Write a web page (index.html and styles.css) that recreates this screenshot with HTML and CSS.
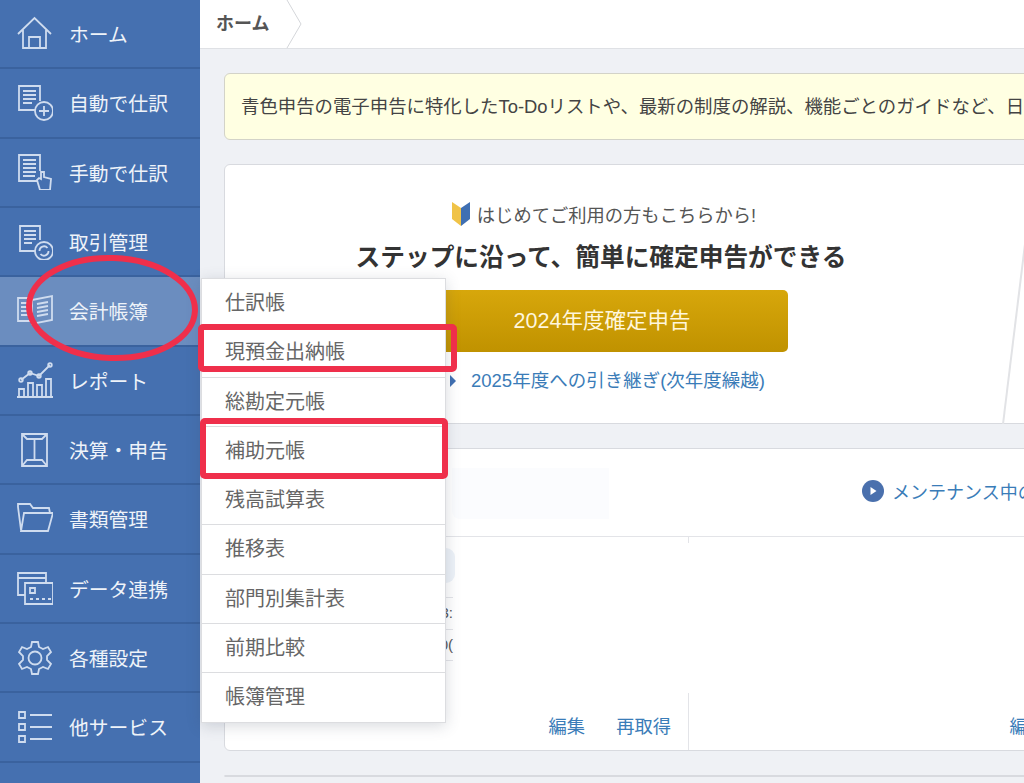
FILE: index.html
```html
<!DOCTYPE html>
<html lang="ja">
<head>
  <meta charset="UTF-8" />
  <meta name="viewport" content="width=device-width, initial-scale=1.0" />
  <title>ホーム</title>
  <link rel="stylesheet" href="styles.css">
</head>
<body>
  <aside class="sidebar">
    <a class="side-item">
      <svg class="side-icon" viewBox="0 0 36 36"><path d="M1 18 17.500 2 34 18M6 14v18h23V14M12 32V21h11v11"/></svg>
      <span>ホーム</span>
    </a>
    <a class="side-item">
      <svg class="side-icon" viewBox="0 0 36 36"><path d="M18 25H2V1h21v15M6 6h13M6 10h13M6 14h13M6 18h9"/><circle cx="27" cy="26" r="9"/><path d="M27 21v10M22 26h10"/></svg>
      <span>自動で仕訳</span>
    </a>
    <a class="side-item">
      <svg class="side-icon" viewBox="0 0 36 36"><path d="M20 27H2V1h21v16M6 6h13M6 10h13M6 14h13M6 18h13M6 22h12"/><path d="M23 36l-3-10 2-2 2 1v-7h3v5l7 2-1 11z"/></svg>
      <span>手動で仕訳</span>
    </a>
    <a class="side-item">
      <svg class="side-icon" viewBox="0 0 36 36"><path d="M18 27H3V2h20v14M7 7h12M7 11h12M7 15h12M7 19h8"/><circle cx="27" cy="27" r="9"/><path d="M22.500 27a4.500 4.500 0 0 1 8-3M31.500 27a4.500 4.500 0 0 1-8 3"/></svg>
      <span>取引管理</span>
    </a>
    <a class="side-item active">
      <svg class="side-icon" viewBox="0 0 36 36"><path d="M15 5 1 5v23h14M15 7l20-4v24l-20 4zM4 10h8M4 14h8M4 18h8M4 22h8M20 11l11-2M20 15l11-2M20 19l11-2M20 23l11-2"/></svg>
      <span>会計帳簿</span>
    </a>
    <a class="side-item">
      <svg class="side-icon" viewBox="0 0 36 36"><path d="M0 35h36M2 34v-7h5v7M11 34V21h5v13M20 34V23h5v11M29 34V17h5v17M4 18l9-7 9 3L33 3"/><circle cx="4" cy="18" r="1.800"/><circle cx="13" cy="11" r="1.800"/><circle cx="22" cy="14" r="1.800"/><circle cx="33" cy="3" r="1.800"/></svg>
      <span>レポート</span>
    </a>
    <a class="side-item">
      <svg class="side-icon" viewBox="0 0 36 36"><path d="M5 2h25v32H5zM5 2l5 5h15l5-5M10 7h15M17.500 7v21M5 34l5-6h15l5 6"/></svg>
      <span>決算・申告</span>
    </a>
    <a class="side-item">
      <svg class="side-icon" viewBox="0 0 36 36"><path d="M4 29 1 6V3h12l3 4h16l1 5M4 30h27l5-18H7z"/></svg>
      <span>書類管理</span>
    </a>
    <a class="side-item">
      <svg class="side-icon" viewBox="0 0 36 36"><path d="M8 25H1V3h28v10M1 8h28M8 13h28v21H8zM13 18h5v5h-5zM13 29h3M19 29h3M25 29h3M31 29h3"/></svg>
      <span>データ連携</span>
    </a>
    <a class="side-item">
      <svg class="side-icon" viewBox="0 0 36 36"><path d="M15 2h6l1 5 4 2 5-2 3 5-4 4v4l4 4-3 5-5-2-4 2-1 5h-6l-1-5-4-2-5 2-3-5 4-4v-4l-4-4 3-5 5 2 4-2z"/><circle cx="18" cy="18" r="6.500"/></svg>
      <span>各種設定</span>
    </a>
    <a class="side-item">
      <svg class="side-icon" viewBox="0 0 36 36"><path d="M2 3h6v6H2zM2 15h6v6H2zM2 27h6v6H2zM13 6h22M13 18h22M13 30h22"/></svg>
      <span>他サービス</span>
    </a>
  </aside>

  <div class="content">
    <div class="topbar">
      <div class="crumb">ホーム</div>
      <svg class="crumb-arrow" viewBox="0 0 16 48"><path d="M1 0 15 24 1 48"/></svg>
    </div>

    <div class="page">
      <div class="notice">青色申告の電子申告に特化したTo-Doリストや、最新の制度の解説、機能ごとのガイドなど、日々の業務に役立つ情報をご案内しています。</div>

      <section class="card hero">
        <svg class="hero-line" viewBox="0 0 24 180"><path d="M23 0 1 180"/></svg>
        <div class="hero-inner">
          <p class="hero-lead">
            <svg class="wakaba" viewBox="0 0 18 24"><path class="wakaba-l" d="M0 0 9 6v18L0 17z"/><path class="wakaba-r" d="M18 0 9 6v18l9-7z"/></svg>
            はじめてご利用の方もこちらから!
          </p>
          <h2 class="hero-title">ステップに沿って、簡単に確定申告ができる</h2>
          <a class="gold-btn">2024年度確定申告</a>
          <a class="hero-link">2025年度への引き継ぎ(次年度繰越)</a>
        </div>
      </section>

      <section class="card accounts">
        <div class="accounts-head">
          <div class="faint-box"></div>
          <a class="maint-link">
            <svg class="play" viewBox="0 0 22 22"><circle cx="11" cy="11" r="11"/><path d="M8.500 7v8l6-4z"/></svg>
            メンテナンス中の金融機関について
          </a>
        </div>
        <div class="accounts-body">
          <div class="acct-col">
            <div class="acct-logo"></div>
            <div class="acct-rows">
              <div class="acct-row">3:</div>
              <div class="acct-row">0(</div>
            </div>
            <div class="acct-foot"><a>編集</a><a>再取得</a></div>
          </div>
          <div class="acct-col">
            <div class="acct-foot"><a>編集</a><a>再取得</a></div>
          </div>
        </div>
      </section>

      <section class="card"></section>
    </div>
  </div>

  <ul class="flyout">
    <li>仕訳帳</li>
    <li>現預金出納帳</li>
    <li>総勘定元帳</li>
    <li>補助元帳</li>
    <li>残高試算表</li>
    <li>推移表</li>
    <li>部門別集計表</li>
    <li>前期比較</li>
    <li>帳簿管理</li>
  </ul>

  <!-- red marks drawn over the screenshot -->
  <svg class="marks" viewBox="0 0 1024 783">
    <ellipse cx="112" cy="308" rx="83" ry="50" transform="rotate(2 112 308)"/>
    <rect x="201" y="327" width="253" height="42" rx="2"/>
    <rect x="203" y="421" width="242" height="55" rx="2"/>
  </svg>
</body>
</html>
```

FILE: styles.css
```css
* { box-sizing: border-box; }
html, body { margin: 0; padding: 0; height: 100%; }
body { display: flex; height: 783px; overflow: hidden; background: #eff1f5; color: #555; font-family: "Liberation Sans", "Noto Sans CJK JP", sans-serif; position: relative; }

.sidebar { width: 200px; flex: none; background: #4570b0; }
.side-item { display: flex; align-items: center; gap: 16px; height: 69.33px; padding-left: 17px; border-bottom: 2px solid #3a629e; color: #eef3f9; font-size: 19.800px; }
.side-item.active { background: #6b8dbf; }
.side-icon { width: 36px; height: 36px; flex: none; fill: none; stroke: #cfdcef; stroke-width: 1.800; }

.content { flex: 1; min-width: 0; overflow: hidden; }
.topbar { display: flex; height: 49px; background: #fff; border-bottom: 1px solid #dfe1e5; }
.crumb { padding: 0 16px; width: 86px; line-height: 48px; font-size: 18px; font-weight: 700; color: #555; }
.crumb-arrow { width: 16px; height: 48px; fill: none; stroke: #d4d6da; }

.page { padding: 24px 0 0 24px; width: 960px; }
.notice { height: 67px; width: 900px; padding-left: 16px; line-height: 66px; background: #ffffe2; border: 1px solid #d3d3c8; border-radius: 6px; font-size: 18.400px; white-space: nowrap; overflow: hidden; color: #444; }
.card { width: 925px; background: #fff; border: 1px solid #d8dadf; border-radius: 6px; margin-top: 24px; }

.hero { position: relative; height: 260px; }
.hero-inner { display: flex; flex-direction: column; align-items: center; width: 762px; padding-top: 35px; }
.hero-lead { display: flex; align-items: center; gap: 7px; margin: 0; padding-right: 4px; height: 28px; font-size: 18.300px; color: #555; }
.wakaba { width: 18px; height: 24px; }
.wakaba-l { fill: #f0c348; }
.wakaba-r { fill: #3f6fb2; }
.hero-title { margin: 12px 0 0; padding-right: 10px; height: 36px; line-height: 36px; font-size: 24.700px; font-weight: 700; color: #333; }
.gold-btn { display: block; width: 364px; height: 62px; margin-top: 14px; padding-right: 8px; line-height: 62px; text-align: center; font-size: 21.500px; color: #fff6dc; background: linear-gradient(#d7a70b, #c09200); border-radius: 5px; }
.hero-link { margin-top: 16px; font-size: 18.500px; line-height: 26px; color: #3a7cb8; position: relative; left: 12px; }
.hero-link::before { content: ""; position: absolute; left: -21px; top: 7px; border-left: 6px solid #3f6fb2; border-top: 6px solid transparent; border-bottom: 6px solid transparent; }
.hero-line { position: absolute; left: 777px; top: 79px; width: 24px; height: 180px; fill: none; stroke: #e2e3e6; stroke-width: 2; }

.accounts { height: 303px; }
.accounts-head { display: flex; height: 88px; border-bottom: 1px solid #e3e4e8; }
.faint-box { flex: none; width: 157px; height: 51px; margin: 19px 0 0 227px; background: #fbfcfe; border-radius: 0 0 0 8px; }
.maint-link { display: flex; align-items: center; gap: 8px; margin-left: 253px; padding-bottom: 4px; font-size: 18px; color: #3a7cb8; white-space: nowrap; }
.play { width: 22px; height: 22px; flex: none; }
.play circle { fill: #4a70ad; }
.play path { fill: #fff; }

.accounts-body { display: grid; grid-template-columns: 464px 460px; height: 213px; }
.acct-col { display: flex; flex-direction: column; }
.acct-col:first-child::before { content: ""; display: block; height: 6px; border-right: 1px solid #e3e4e8; }
.acct-logo { width: 9px; height: 35px; margin: 5px 0 0 221px; background: #edf2f8; border-radius: 0 10px 10px 0; }
.acct-rows { width: 212px; margin: 14px 0 0 16px; border-bottom: 1px solid #e3e4e8; }
.acct-row { height: 31.500px; line-height: 30px; border-top: 1px solid #e3e4e8; text-align: right; font-size: 15px; color: #555; white-space: nowrap; }
.acct-foot { display: flex; justify-content: flex-end; gap: 31px; height: 57px; margin-top: auto; padding: 19px 17px 0 0; font-size: 18.300px; color: #3a7cb8; }
.acct-col:first-child .acct-foot { border-right: 1px solid #e3e4e8; }

.flyout { position: absolute; left: 201px; top: 278px; width: 245px; margin: 0; padding: 0; list-style: none; background: #fff; border: 1px solid #dcdde0; box-shadow: 0 3px 14px rgba(60, 70, 90, 0.2); }
.flyout li { height: 49.250px; padding-left: 23px; line-height: 48px; font-size: 20px; color: #666; border-bottom: 1px solid #dcdde0; }
.flyout li:last-child { border-bottom: 0; }

.marks { position: absolute; left: 0; top: 0; width: 1024px; height: 783px; fill: none; stroke: #ef2f4b; stroke-width: 6; pointer-events: none; }
```
